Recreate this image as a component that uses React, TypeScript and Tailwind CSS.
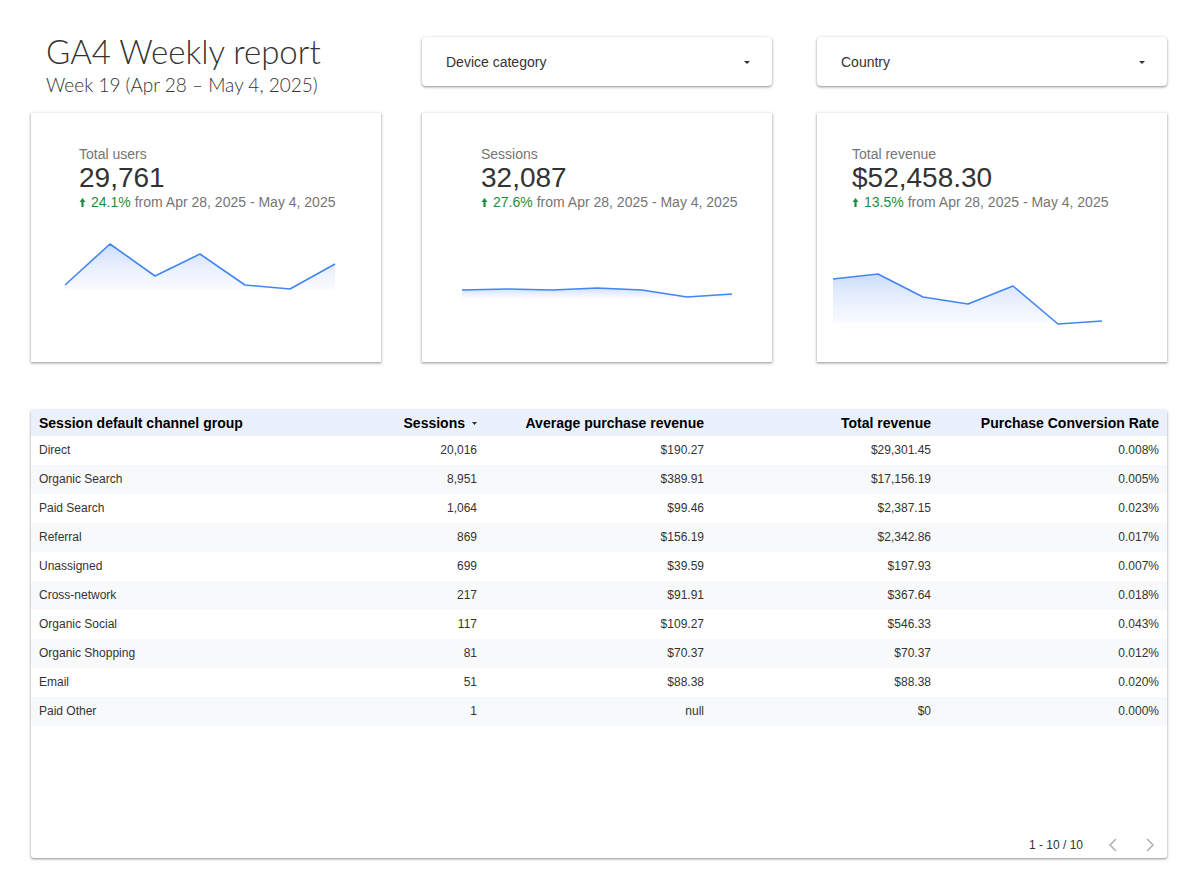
const rows = [
  ["Direct", "20,016", "$190.27", "$29,301.45", "0.008%"],
  ["Organic Search", "8,951", "$389.91", "$17,156.19", "0.005%"],
  ["Paid Search", "1,064", "$99.46", "$2,387.15", "0.023%"],
  ["Referral", "869", "$156.19", "$2,342.86", "0.017%"],
  ["Unassigned", "699", "$39.59", "$197.93", "0.007%"],
  ["Cross-network", "217", "$91.91", "$367.64", "0.018%"],
  ["Organic Social", "117", "$109.27", "$546.33", "0.043%"],
  ["Organic Shopping", "81", "$70.37", "$70.37", "0.012%"],
  ["Email", "51", "$88.38", "$88.38", "0.020%"],
  ["Paid Other", "1", "null", "$0", "0.000%"],
];

type Scorecard = {
  label: string;
  value: string;
  change: string;
  pad: string;
  points: number[][];
  floor: number;
};

const cards: Scorecard[] = [
  {
    label: "Total users",
    value: "29,761",
    change: "24.1%",
    pad: "pl-[48px]",
    points: [[34, 62], [79, 21], [124, 53], [169, 31], [214, 62], [259, 66], [304, 41]],
    floor: 66,
  },
  {
    label: "Sessions",
    value: "32,087",
    change: "27.6%",
    pad: "pl-[59px]",
    points: [[40, 67], [85, 66], [130, 67], [175, 65], [220, 67], [265, 74], [310, 71]],
    floor: 75,
  },
  {
    label: "Total revenue",
    value: "$52,458.30",
    change: "13.5%",
    pad: "pl-[35px]",
    points: [[16, 56], [61, 51], [106, 74], [151, 81], [196, 63], [241, 101], [285, 98]],
    floor: 100,
  },
];

const UpArrow = () => (
  <svg width="7" height="10" viewBox="0 0 7 10" className="inline-block mr-[5px] mb-[1px]">
    <path d="M3.5 1 L6.5 5 H4.6 V10 H2.4 V5 H0.5 Z" fill="#1e8e3e" />
  </svg>
);

const Sparkline = ({ id, points, floor }: { id: string; points: number[][]; floor: number }) => {
  const line = points.map((p) => p.join(",")).join(" ");
  const first = points[0];
  const last = points[points.length - 1];
  const area = `M${first[0]},${floor} L${line.replace(/ /g, " L")} L${last[0]},${floor} Z`;
  return (
    <svg width="350" height="130" className="block">
      <defs>
        <linearGradient id={id} x1="0" y1="0" x2="0" y2="1">
          <stop offset="0" stopColor="#c6d9fb" stopOpacity="0.9" />
          <stop offset="1" stopColor="#eef4fe" stopOpacity="0.4" />
        </linearGradient>
      </defs>
      <path d={area} fill={`url(#${id})`} />
      <polyline points={line} fill="none" stroke="#4285f4" strokeWidth="1.6" strokeLinejoin="round" />
    </svg>
  );
};

const Dropdown = ({ label, className }: { label: string; className: string }) => (
  <div
    className={`w-[350px] h-[49px] rounded-[4px] bg-white shadow-[0_1px_2px_rgba(0,0,0,0.3),0_1px_3px_1px_rgba(0,0,0,0.12)] flex items-center justify-between pl-[24px] pr-[22px] pt-[2px] ${className}`}
  >
    <span className="text-[14px] text-[#333]">{label}</span>
    <svg width="6" height="3" viewBox="0 0 6 3">
      <path d="M0 0 H6 L3 3 Z" fill="#333" />
    </svg>
  </div>
);

const App = () => {
  return (
    <div className="w-[1195px] h-[875px] bg-white font-['Liberation_Sans',Arial,sans-serif] pl-[31px] pt-[37px]">
      {/* header */}
      <div className="flex h-[76px]">
        <div className="w-[350px] pl-[15px] -mt-[5px] text-[#333] font-['Lato',sans-serif]">
          <h1 className="text-[33px] leading-[38px] font-light">GA4 Weekly report</h1>
          <p className="text-[19px] leading-[26px] mt-[2px] font-light">Week 19 (Apr 28 – May 4, 2025)</p>
        </div>
        <Dropdown label="Device category" className="ml-[41px]" />
        <Dropdown label="Country" className="ml-[45px]" />
      </div>

      {/* scorecards */}
      <div className="flex">
        {cards.map((c, i) => (
          <div
            key={c.label}
            className={`w-[350px] h-[249px] bg-white shadow-[0_1px_2px_rgba(0,0,0,0.3),0_1px_3px_1px_rgba(0,0,0,0.12)] ${i === 1 ? "ml-[41px]" : i === 2 ? "ml-[45px]" : ""}`}
          >
            <div className={`h-[110px] pt-[33px] ${c.pad}`}>
              <div className="text-[14px] leading-[16px] text-[#757575]">{c.label}</div>
              <div className="text-[28px] leading-[31px] text-[#333]">{c.value}</div>
              <div className="text-[14px] leading-[18px] text-[#757575] flex items-center">
                <UpArrow />
                <span className="text-[#1e8e3e] mr-[4px]">{c.change}</span>
                from Apr 28, 2025 - May 4, 2025
              </div>
            </div>
            <Sparkline id={`g${i}`} points={c.points} floor={c.floor} />
          </div>
        ))}
      </div>

      {/* table */}
      <div className="mt-[48px] w-[1136px] h-[448px] bg-white rounded-[3px] shadow-[0_1px_2px_rgba(0,0,0,0.3),0_1px_3px_1px_rgba(0,0,0,0.12)] flex flex-col overflow-hidden">
        <div className="grid grid-cols-[270px_184px_227px_227px_1fr] h-[26px] bg-[#eaf1fd] text-[14px] font-bold text-black items-center">
          <div className="pl-[8px]">Session default channel group</div>
          <div className="pr-[8px] flex justify-end items-center">
            Sessions
            <svg width="5" height="3" viewBox="0 0 5 3" className="ml-[7px]">
              <path d="M0 0 H5 L2.5 3 Z" fill="#333" />
            </svg>
          </div>
          <div className="pr-[8px] text-right">Average purchase revenue</div>
          <div className="pr-[8px] text-right">Total revenue</div>
          <div className="pr-[8px] text-right">Purchase Conversion Rate</div>
        </div>
        <div className="flex-1">
          {rows.map((r, i) => (
            <div
              key={r[0]}
              className={`grid grid-cols-[270px_184px_227px_227px_1fr] h-[29px] items-center pb-[2px] text-[12px] text-[#333] ${i % 2 === 1 ? "bg-[#f8f9fa]" : "bg-white"}`}
            >
              <div className="pl-[8px]">{r[0]}</div>
              <div className="pr-[8px] text-right">{r[1]}</div>
              <div className="pr-[8px] text-right">{r[2]}</div>
              <div className="pr-[8px] text-right">{r[3]}</div>
              <div className="pr-[8px] text-right">{r[4]}</div>
            </div>
          ))}
        </div>
        <div className="h-[30px] flex items-center justify-end pr-[12px] pt-[4px] text-[12px] text-[#333]">
          <span>1 - 10 / 10</span>
          <svg width="10" height="14" viewBox="0 0 10 14" className="ml-[25px]">
            <path d="M8 1 L2 7 L8 13" fill="none" stroke="#b0b0b0" strokeWidth="1.5" />
          </svg>
          <svg width="10" height="14" viewBox="0 0 10 14" className="ml-[27px]">
            <path d="M2 1 L8 7 L2 13" fill="none" stroke="#b0b0b0" strokeWidth="1.5" />
          </svg>
        </div>
      </div>
    </div>
  );
};

export default App;
